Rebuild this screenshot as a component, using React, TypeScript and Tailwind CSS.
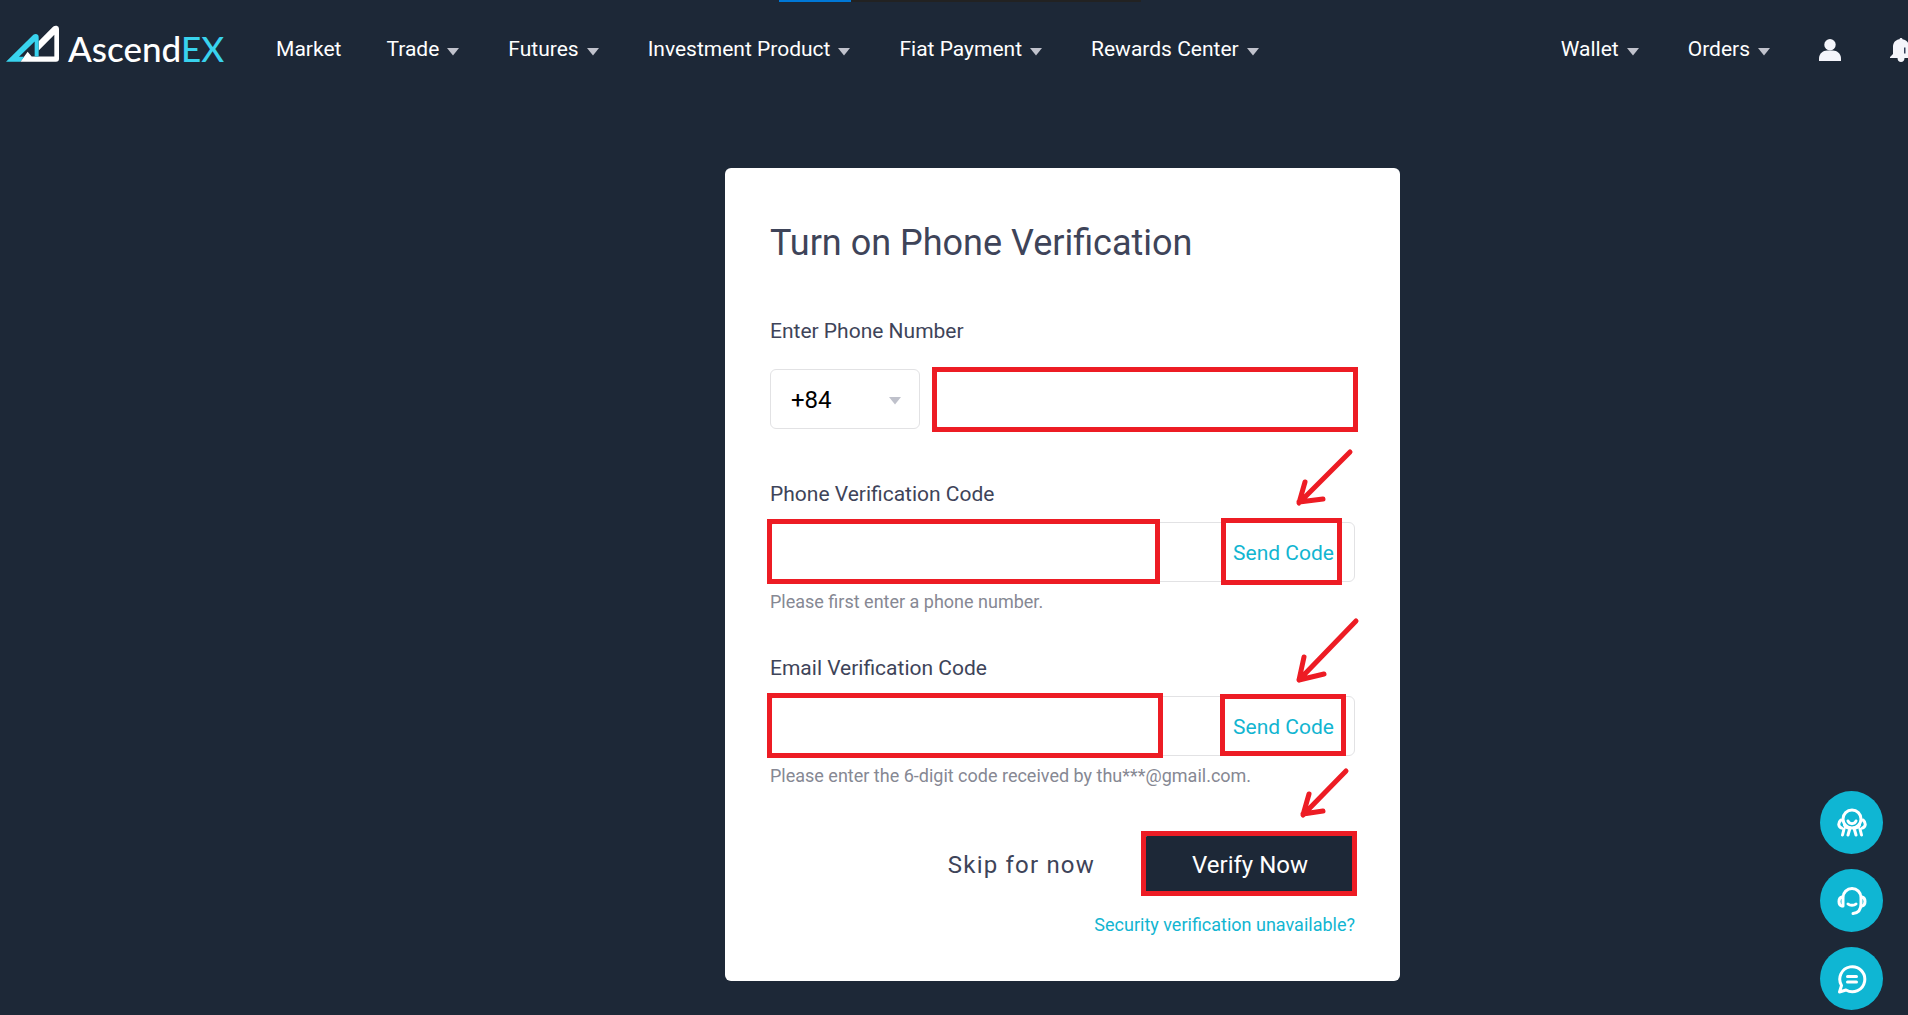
import { ReactNode } from "react";

function Caret({ className = "fill-[#c0c2cc]" }: { className?: string }) {
  return (
    <svg viewBox="0 0 12 8" className={`h-2 w-3 ${className}`} aria-hidden="true">
      <path d="M0 0h12L6 7.500z" />
    </svg>
  );
}

function NavItem({ label, menu = true }: { label: string; menu?: boolean }) {
  if (!menu) {
    return (
      <a href="#market" className="-mr-1 whitespace-nowrap">
        {label}
      </a>
    );
  }
  return (
    <button type="button" className="flex items-center gap-2 whitespace-nowrap">
      {label}
      <span className="pt-1">
        <Caret />
      </span>
    </button>
  );
}

function Logo() {
  return (
    <a href="#home" aria-label="AscendEX" className="flex items-baseline gap-2 pb-3">
      <svg viewBox="0 0 162 110" className="h-[37px] w-[54px]" aria-hidden="true">
        <path
          fillRule="evenodd"
          fill="#fff"
          d="M43 110L65 80L77 94H98V66V48L141 5Q146 1 152 2Q159 4 159 11V101Q159 110 150 110ZM98 94H145V29L98 76Z"
        />
        <path
          fillRule="evenodd"
          fill="#39d3ee"
          d="M0 110L82 29Q87 25 93 27Q98 29 98 35V94H86V49L39 95H55L43 110Z"
        />
      </svg>
      <span className="font-['Lato'] text-[35px] leading-7 font-medium text-white">
        Ascend<span className="text-[#39d3ee]">EX</span>
      </span>
    </a>
  );
}

function Mark({ className }: { className: string }) {
  return (
    <span
      aria-hidden="true"
      className={`pointer-events-none absolute border-5 border-[#ed1c24] ${className}`}
    />
  );
}

function Arrow({ className, d, box }: { className: string; d: string; box: string }) {
  return (
    <svg
      viewBox={box}
      aria-hidden="true"
      className={`pointer-events-none absolute fill-none stroke-[#ed1c24] ${className}`}
      strokeWidth="5"
      strokeLinecap="round"
      strokeLinejoin="round"
    >
      <path d={d} />
    </svg>
  );
}

function CodeField({
  id,
  label,
  hint,
  children,
}: {
  id: string;
  label: string;
  hint: string;
  children: ReactNode;
}) {
  return (
    <div className="flex flex-col">
      <label htmlFor={id} className="text-[21px] leading-8">
        {label}
      </label>
      <div className="relative mt-3 flex h-15 rounded-md border border-[#e2e2e4]">
        <input id={id} className="min-w-0 flex-1 rounded-md px-5 text-2xl outline-none" />
        <button type="button" className="px-5 pt-1 text-[21px] text-[#12b5d1]">
          Send Code
        </button>
        {children}
      </div>
      <p className="mt-1 text-lg leading-8 text-[#868893]">{hint}</p>
    </div>
  );
}

function FloatButton({ label, children }: { label: string; children: ReactNode }) {
  return (
    <button
      type="button"
      aria-label={label}
      className="flex size-[63px] items-center justify-center rounded-full bg-[#0fb6d3]"
    >
      <svg
        viewBox="0 0 30 30"
        className="size-[30px] fill-none stroke-white"
        strokeWidth="3"
        strokeLinecap="round"
        strokeLinejoin="round"
      >
        {children}
      </svg>
    </button>
  );
}

export default function App() {
  return (
    <div className="relative min-h-screen overflow-x-clip bg-[#1d2837] font-['Roboto',sans-serif]">
      <div aria-hidden="true" className="absolute top-0 left-[779px] flex h-0.5 w-[362px] bg-[#222]">
        <span className="w-[72px] bg-[#0078d7]" />
      </div>

      <header className="flex h-[98px] items-center pl-[6px] text-[21px] text-white">
        <Logo />
        <nav className="ml-[52px] flex items-center gap-[49px] pt-0.5">
          <NavItem label="Market" menu={false} />
          <NavItem label="Trade" />
          <NavItem label="Futures" />
          <NavItem label="Investment Product" />
          <NavItem label="Fiat Payment" />
          <NavItem label="Rewards Center" />
        </nav>
        <div className="-mr-1 ml-auto flex items-center gap-[49px] pt-0.5">
          <NavItem label="Wallet" />
          <NavItem label="Orders" />
          <button type="button" aria-label="Account">
            <svg viewBox="0 0 22 22" className="size-[22px] fill-[#f4f5fb]">
              <circle cx="11" cy="5.700" r="5.700" />
              <path d="M0 22v-2.500C0 14.500 4 11.500 8 11.500h6c4 0 8 3 8 8V22z" />
            </svg>
          </button>
          <button type="button" aria-label="Notifications">
            <svg viewBox="0 0 22 24" className="h-6 w-[22px] fill-[#f4f5fb]">
              <path d="M11 0c1 0 1.500.6 1.500 1.300C17 2 19 5 19 9v7l3 3v1H0v-1l3-3V9c0-4 2-7 6.500-7.700C9.500.6 10 0 11 0zM7.500 20h7c0 2.500-1.500 4-3.500 4s-3.500-1.500-3.500-4z" />
              <path d="M14 9.500h1.500v6H14z" fill="#34405a" />
            </svg>
          </button>
        </div>
      </header>

      <main className="flex justify-center pt-[70px] pb-[34px] pl-[217px]">
        <form className="w-[675px] rounded-md bg-white px-[45px] pt-[51px] pb-10 text-[#3e4459]">
          <h1 className="text-4xl leading-12">Turn on Phone Verification</h1>

          <div className="mt-12 flex flex-col">
            <label htmlFor="phone" className="text-[21px] leading-8">
              Enter Phone Number
            </label>
            <div className="relative mt-[22px] flex gap-[15px]">
              <div className="relative h-15 w-[150px]">
                <select
                  aria-label="Country code"
                  className="size-full appearance-none rounded-md border border-[#e2e2e4] bg-white pt-0.5 pl-5 text-2xl text-black"
                >
                  <option>+84</option>
                </select>
                <span className="pointer-events-none absolute inset-y-0 right-[19px] flex items-center pt-1">
                  <Caret className="fill-[#bfc1cb]" />
                </span>
              </div>
              <input
                id="phone"
                type="tel"
                className="h-15 min-w-0 flex-1 rounded-md border border-[#e2e2e4] px-5 text-2xl"
              />
              <Mark className="-top-0.5 -right-[3px] h-[65px] w-[426px]" />
            </div>
          </div>

          <div className="mt-[49px] flex flex-col gap-[34px]">
            <CodeField
              id="phone-code"
              label="Phone Verification Code"
              hint="Please first enter a phone number."
            >
              <Mark className="-top-1 -left-1 h-[65px] w-[393px]" />
              <Mark className="-top-[5px] right-3 h-[67px] w-[121px]" />
              <Arrow
                className="right-0 bottom-[73px] h-[60px] w-[60px]"
                box="1294 448 60 60"
                d="M1350 452L1299 503L1305 482M1299 502L1323 499"
              />
            </CodeField>
            <CodeField
              id="email-code"
              label="Email Verification Code"
              hint="Please enter the 6-digit code received by thu***@gmail.com."
            >
              <Mark className="-top-1 -left-1 h-[65px] w-[396px]" />
              <Mark className="-top-[3px] right-2 h-[62px] w-[126px]" />
              <Arrow
                className="-right-1.5 bottom-[69px] h-[70px] w-[67px]"
                box="1294 616 67 70"
                d="M1357 621L1300 680L1305 657M1300 680L1325 674"
              />
            </CodeField>
          </div>

          <div className="relative mt-[42px] flex justify-end gap-6">
            <button type="button" className="px-[26px] pt-0.5 text-2xl tracking-wider">
              Skip for now
            </button>
            <button
              type="submit"
              className="h-15 w-[210px] rounded-md bg-[#1d2837] pt-0.5 text-2xl text-white"
            >
              Verify Now
            </button>
            <Mark className="-top-[3px] -right-0.5 h-[65px] w-[216px]" />
            <Arrow
              className="right-1 bottom-[74px] h-[54px] w-[54px]"
              box="1297 766 54 54"
              d="M1346 771L1303 815L1309 794M1303 814L1323 811"
            />
          </div>

          <div className="mt-[15px] text-right text-lg leading-8 text-[#12b5d1]">
            <a href="#unavailable">Security verification unavailable?</a>
          </div>
        </form>
      </main>

      <aside className="fixed right-[25px] bottom-[5px] flex flex-col gap-[15px]">
        <FloatButton label="Community">
          <circle cx="15" cy="11" r="9" />
          <path d="M11 13c1.500 3.500 6.500 3.500 8 0" />
          <path d="M4 12c-3.500 3-2.500 7 .5 8M26 12c3.500 3 2.500 7-.5 8M5.500 27l1.500-6M11 27l2-7M24.500 27L23 21M19 27l-2-7M7.500 17c1 2 2.500 3 4.500 3M22.500 17c-1 2-2.500 3-4.500 3" />
        </FloatButton>
        <FloatButton label="Support">
          <path d="M6 20V11.500a9 9 0 0 1 18 0V18c0 6-3 9-8 9.500" />
          <path d="M5 11c-4 1-4 8 0 9M25 11c4 1 4 8 0 9M11 18c2 1.800 6 1.800 8 0" />
        </FloatButton>
        <FloatButton label="Chat">
          <path d="M4.500 21.500A12.500 12.500 0 1 1 9 26L2.500 28z" />
          <path d="M10.500 12.500h9M10.500 18h9" />
        </FloatButton>
      </aside>
    </div>
  );
}
